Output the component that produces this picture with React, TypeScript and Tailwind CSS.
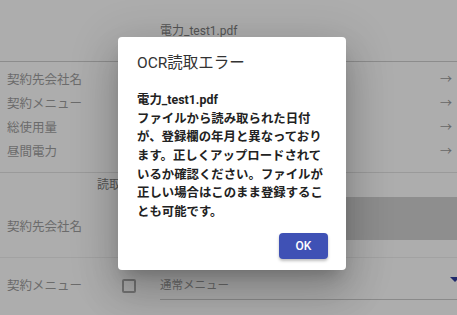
import React from 'react'

const jp = { fontFamily: 'Roboto, "Noto Sans CJK JP", sans-serif' }

const topRows = ['契約先会社名', '契約メニュー', '総使用量', '昼間電力']

const message = [
  '電力_test1.pdf',
  'ファイルから読み取られた日付',
  'が、登録欄の年月と異なっており',
  'ます。正しくアップロードされて',
  'いるか確認ください。ファイルが',
  '正しい場合はこのまま登録するこ',
  'とも可能です。',
]

export default function App() {
  return (
    <div className="relative w-[457px] h-[315px] overflow-hidden bg-[#adadad]" style={jp}>
      {/* header */}
      <div className="h-[62px] border-b border-[#8c8c8c] pl-[160px] pt-[18px]">
        <span className="text-[12px] leading-[18px] text-[#555]">電力_test1.pdf</span>
      </div>

      {/* summary rows */}
      <div className="pt-[6px] pb-[8px] border-b border-[#9a9a9a]">
        {topRows.map((r) => (
          <div key={r} className="h-6 flex items-center justify-between pl-[7px] pr-[5px]">
            <span className="text-[12.5px] text-[#6b6b6b]">{r}</span>
            <span className="text-[12px] text-[#666]">→</span>
          </div>
        ))}
      </div>

      {/* column header */}
      <div className="h-[24px] flex items-center pl-[97px]">
        <span className="text-[12px] text-[#555]">読取結果</span>
      </div>

      {/* 契約先会社名 input row */}
      <div className="h-[61px] flex border-b border-[#a2a2a2]">
        <div className="w-[160px] flex items-center pl-[7px]">
          <span className="text-[12.5px] text-[#6b6b6b]">契約先会社名</span>
        </div>
        <div className="flex-1">
          <div className="h-[43px] bg-[#8e8e8e]" />
        </div>
      </div>

      {/* 契約メニュー row */}
      <div className="h-[56px] flex">
        <div className="w-[122px] flex items-center pl-[7px]">
          <span className="text-[12.5px] text-[#6b6b6b]">契約メニュー</span>
        </div>
        <div className="w-[38px] flex items-center">
          <div className="w-[14px] h-[14px] border-2 border-[#747474] rounded-[2px]" />
        </div>
        <div className="flex-1 pt-[18px]">
          <div className="h-[24px] border-b border-[#8a8a8a] flex items-start justify-between">
            <span className="text-[11.5px] text-[#6a6a6a] pt-[1px]">通常メニュー</span>
            <span className="w-0 h-0 mt-[1px] mr-[-3px] border-l-[5px] border-r-[5px] border-t-[5px] border-l-transparent border-r-transparent border-t-[#1f2a6b]" />
          </div>
        </div>
      </div>

      {/* dialog */}
      <div className="absolute left-[118px] top-[37px] w-[228px] h-[233px] bg-white rounded-[4px] shadow-[0_11px_15px_-7px_rgba(0,0,0,0.2),0_24px_38px_3px_rgba(0,0,0,0.14),0_9px_46px_8px_rgba(0,0,0,0.12)] flex flex-col">
        <div className="pl-[19px] pt-[16px] h-[36px] text-[15.5px] leading-[20px] text-[#333]">OCR読取エラー</div>
        <div className="pl-[19px] pt-[18px] text-[12.4px] leading-[18.67px] font-bold text-[#222]">
          {message.map((m) => (
            <div key={m} className="whitespace-nowrap">{m}</div>
          ))}
        </div>
        <div className="flex justify-end pr-[18px] pt-[11px]">
          <button className="w-[49px] h-[26px] rounded-[4px] bg-[#3f51b5] text-white text-[12px] font-medium shadow-[0_2px_3px_rgba(0,0,0,0.25)]">
            OK
          </button>
        </div>
      </div>
    </div>
  )
}
